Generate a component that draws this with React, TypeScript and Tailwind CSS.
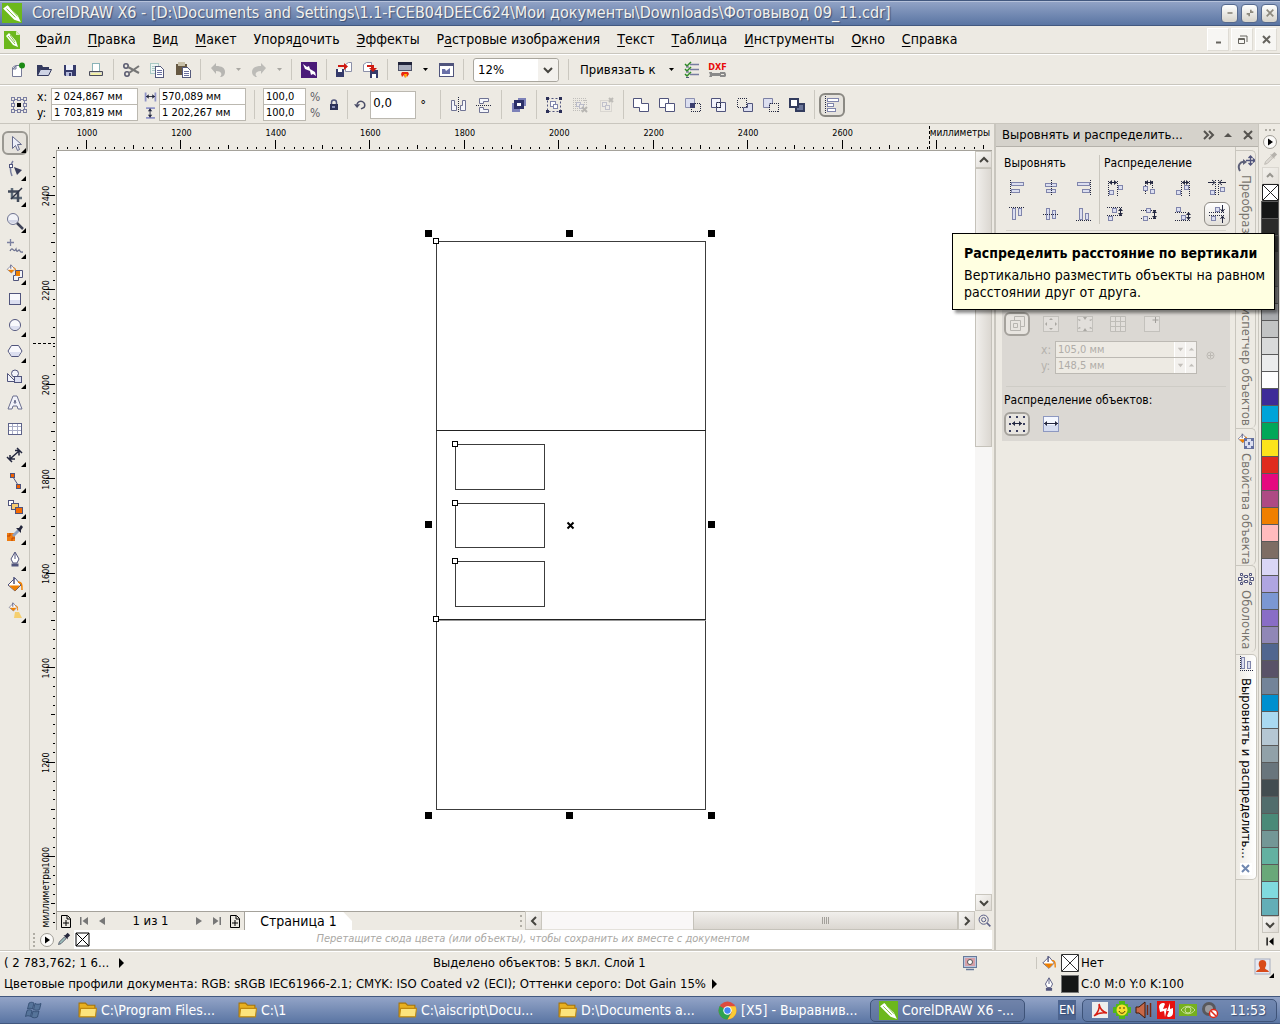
import * as React from "react";
import { clsx } from "clsx";

const INK = "#50547c";
const PALE = "#dcdff0";

function ArrowH({ x1, x2, y }: { x1: number; x2: number; y: number }): React.ReactElement {
  return (
    <g fill="#23273f" stroke="none">
      <rect x={x1} y={y} width={x2 - x1} height="1" />
      <path d={`M${x1} ${y + 0.5}l3 -2.5v5z M${x2} ${y + 0.5}l-3 -2.5v5z`} />
    </g>
  );
}

function ArrowV({ x, y1, y2 }: { x: number; y1: number; y2: number }): React.ReactElement {
  return (
    <g fill="#23273f" stroke="none">
      <rect x={x} y={y1} width="1" height={y2 - y1} />
      <path d={`M${x + 0.5} ${y1}l-2.5 3h5z M${x + 0.5} ${y2}l-2.5 -3h5z`} />
    </g>
  );
}

function Dots({ d }: { d: string }): React.ReactElement {
  return <path d={d} stroke="#23273f" strokeDasharray="1 1" fill="none" shapeRendering="crispEdges" />;
}

function Boxes({ at, fill = PALE }: { at: number[][]; fill?: string }): React.ReactElement {
  return (
    <g shapeRendering="crispEdges" fill={fill} stroke="#8085ac">
      {at.map(([x, y, w, h]) => (
        <rect key={`${x}-${y}`} x={x + 0.5} y={y + 0.5} width={w - 1} height={h - 1} />
      ))}
    </g>
  );
}

function Bucket({ scale = 1 }: { scale?: number }): React.ReactElement {
  return (
    <g transform={`scale(${scale})`}>
      <path d="M2 9l7-7 6 7-6 6z" fill="#fff" stroke="#50547c" />
      <path d="M3 9.500h11l-5 5.500z" fill="#f08000" />
      <path d="M8 1v7" stroke="#50547c" strokeWidth="1.500" />
      <path d="M12 6c4 0 4 3 4 8" stroke="#f08000" strokeWidth="1.500" fill="none" />
    </g>
  );
}

const nib = (
  <g stroke={INK}>
    <path d="M9 2l4 7-2 4H7L5 9z" fill="#fff" />
    <path d="M9 3v6" />
    <rect x="6" y="14" width="6" height="2" fill={INK} />
  </g>
);

const icons: Record<string, React.ReactNode> = {
  logo: (
    <>
      <rect width="18" height="18" fill="#6cb81c" />
      <path d="M1 5l4-3 9 9 3 6-6-2z" fill="#fff" />
      <path d="M4 5l8 8M7 4l7 8" stroke="#6cb81c" strokeWidth="0.800" />
    </>
  ),
  doc: (
    <>
      <path d="M1 0h12l4 4v14H1z" fill="#6cb81c" />
      <path d="M13 0v4h4z" fill="#d5ecb8" />
      <path d="M3 5l3-3 7 8 2 6-5-2z" fill="#fff" />
      <path d="M5 5l7 8M7 4l5 7" stroke="#6cb81c" strokeWidth="0.800" />
    </>
  ),
  new: (
    <>
      <path d="M3.500 6.500l3-2h6v11h-9z" fill="#fff" stroke="#777b97" />
      <path d="M4 8l3-3v3z" fill={PALE} stroke="#777b97" />
      <circle cx="13" cy="4.500" r="3" fill="#1b8a14" />
    </>
  ),
  open: (
    <>
      <path d="M2 15V4h5l1 2h6v3" fill="#343a5e" />
      <path d="M2.500 14.500L5.500 8.500h11l-3 6z" fill="#ced3e4" stroke="#343a5e" />
    </>
  ),
  save: (
    <>
      <path d="M3 4h12v11H4l-1-1z" fill="#363b6b" />
      <rect x="5" y="4" width="7" height="5" fill="#eef0fa" />
      <rect x="5" y="11" width="6" height="4" fill="#b6bbdb" />
      <rect x="8" y="12" width="2" height="3" fill="#363b6b" />
    </>
  ),
  print: (
    <>
      <rect x="5.500" y="2.500" width="7" height="8" fill="#fff" stroke="#8bb3b8" />
      <path d="M2.500 10.500h13v4h-13z" fill="#d9d7c9" stroke="#4b4c5a" />
      <rect x="4" y="12" width="10" height="2" fill="#f2f0a8" />
    </>
  ),
  cut: (
    <g fill="none" stroke="#5a5b70" strokeWidth="1.600">
      <circle cx="4" cy="5" r="2.200" />
      <circle cx="5" cy="13" r="2.200" />
      <path d="M6 6l11 6M7 12l10-7" stroke="#777" strokeWidth="2" />
    </g>
  ),
  copy: (
    <g shapeRendering="crispEdges">
      <rect x="2.500" y="2.500" width="8" height="10" fill="#eef4f2" stroke="#a9c9c4" />
      <path d="M4 5h5M4 7h3M4 9h3" stroke="#a9c9c4" />
      <path d="M7.500 5.500h5l3 3v8h-8z" fill="#fff" stroke="#555a7c" />
      <path d="M9 9.500h5M9 11.500h5M9 13.500h5" stroke="#6a70a0" />
    </g>
  ),
  paste: (
    <g shapeRendering="crispEdges">
      <rect x="2" y="3" width="11" height="11" fill="#665842" />
      <rect x="4" y="1" width="7" height="4" fill="#c8c0a8" />
      <path d="M8.500 6.500h5l3 3v7h-8z" fill="#fff" stroke="#555a7c" />
      <path d="M10 10.500h5M10 12.500h5M10 14.500h5" stroke="#6a70a0" />
    </g>
  ),
  undo: <path d="M2 7l5-5v3c6 0 9 2 9 6 0 3-2 5-5 5 3-3 1-6-4-6v3z" fill="#b7b6b2" />,
  redo: <path d="M16 7l-5-5v3C5 5 2 7 2 11c0 3 2 5 5 5-3-3-1-6 4-6v3z" fill="#bdbcb8" />,
  connect: (
    <>
      <rect x="1" y="1" width="16" height="16" fill="#4a1a78" />
      <path d="M3 3l4 3 2-1 1 3 5 3 1 4-3-2-2 1-1-4-5-2z" fill="#fff" />
    </>
  ),
  import: (
    <>
      <path d="M10.500 3.500l3-2h3v9h-6z" fill="#fff" stroke="#8b8fa8" />
      <rect x="1" y="8" width="8" height="8" fill="#363b6b" />
      <rect x="3" y="8" width="4" height="3" fill="#fff" />
      <path d="M3 4h6V2l4 3.500L9 9V6H3z" fill="#cf1b12" />
    </>
  ),
  export: (
    <>
      <path d="M2.500 3.500l3-2h5v9h-8z" fill="#fff" stroke="#8b8fa8" />
      <rect x="9" y="9" width="8" height="8" fill="#363b6b" />
      <rect x="11" y="13" width="4" height="4" fill="#fff" />
      <path d="M6 4h7v3h3l-4 4-4-4h2V6H6z" fill="#cf1b12" />
    </>
  ),
  launch: (
    <>
      <rect x="2.500" y="1.500" width="13" height="8" fill="#a9adbd" stroke="#50546a" />
      <rect x="2" y="1" width="14" height="3" fill="#20233a" />
      <path d="M6 11h6l1 2-2 3-1-2-1 3-1-3-2 2-1-3z" fill="#e82810" />
      <path d="M8 13h3l-1 4-1-1z" fill="#ffb000" />
    </>
  ),
  welcome: (
    <>
      <rect x="2.500" y="2.500" width="14" height="13" fill="#fff" stroke={INK} />
      <rect x="2" y="2" width="15" height="3" fill={INK} />
      <path d="M5 8h3l1 2 4-3v6H5z" fill="#6a70a8" />
    </>
  ),
  options: (
    <>
      <path d="M7 3.500h9M7 8.500h9M7 13.500h9" stroke="#777da0" strokeWidth="1.500" />
      <path d="M2 3l2 2 4-4M2 8l2 2 4-4M2 13l2 2 4-4" fill="none" stroke="#2d8a26" strokeWidth="1.500" />
      <path d="M3 6h3M3 11h3M3 16.500h3" stroke={INK} />
    </>
  ),
  wrench: <path d="M0 0h3v1h8V0h5l1 2v2l-1 1h-5V4H3v1H0l1-2z M12 2v1h3V2z" fill="#8a8a8a" fillRule="evenodd" />,
  origin: (
    <g shapeRendering="crispEdges" fill="#edeae3" stroke="#7a7ea2">
      <path d="M3.500 3.500h11v11h-11z" />
      {[2, 8, 14].map((y) =>
        [2, 8, 14].map((x) => <rect key={`${x}-${y}`} x={x - 0.5} y={y - 0.5} width="3" height="3" />),
      )}
      <rect x="7" y="7" width="4" height="4" fill="#000" stroke="none" />
    </g>
  ),
  lock: (
    <>
      <path d="M6.500 9V6.500a2.500 2.500 0 015 0V9" fill="none" stroke={INK} strokeWidth="1.500" />
      <rect x="5" y="8" width="8" height="6" fill="#2d3158" />
      <rect x="7" y="10" width="3" height="2" fill="#8b90b8" />
    </>
  ),
  rotate: (
    <>
      <path d="M4 8a5 5 0 119 4l-4 2" fill="none" stroke="#4b4e68" strokeWidth="2" />
      <path d="M0 8h8l-4 5z" fill="#4b4e68" />
    </>
  ),
  width: (
    <>
      <path d="M3.500 4v10M14.500 4v10" stroke="#8f93c8" strokeWidth="2" />
      <ArrowH x1={4} x2={14} y={8} />
    </>
  ),
  height: (
    <>
      <path d="M4 3.500h10M4 14.500h10" stroke="#8f93c8" strokeWidth="2" />
      <ArrowV x={8} y1={4} y2={14} />
    </>
  ),
  mirrorH: (
    <>
      <Dots d="M9.500 1v16" />
      <path d="M2.500 4.500h3v5h2v5h-5zM16.500 4.500h-3v5h-2v5h5z" fill="#f5f6fb" stroke="#6f7394" />
    </>
  ),
  mirrorV: (
    <>
      <Dots d="M1 9.500h16" />
      <path d="M4.500 2.500h9v3h-5v2h-4zM4.500 16.500h9v-3h-5v-2h-4z" fill="#f5f6fb" stroke="#6f7394" />
    </>
  ),
  front: (
    <g shapeRendering="crispEdges">
      <rect x="8" y="2" width="8" height="8" fill="#7d81b8" />
      <rect x="2" y="7" width="8" height="9" fill="#7d81b8" />
      <rect x="4" y="4" width="10" height="9" fill="#2c3068" />
      <rect x="7" y="7" width="4" height="3" fill="#fff" />
    </g>
  ),
  group: (
    <>
      <path d="M2.500 2.500h13v13h-13z" fill="none" stroke={INK} strokeDasharray="2 2" />
      <path d="M1 1h3v3H1zM14 1h3v3h-3zM1 14h3v3H1zM14 14h3v3h-3z" fill="#2c3058" />
      <Boxes at={[[5, 5, 6, 6], [8, 8, 5, 5]]} fill="#fff" />
    </>
  ),
  ungroup: (
    <g opacity="0.450">
      <path
        d="M2 2.500h14M2 4.500h14M2 12.500h9M2 14.500h9M2.500 4v10M4.500 4v10M13.500 4v6M15.500 4v6"
        stroke="#8b8b8b"
        strokeDasharray="1 1"
      />
      <Boxes at={[[5, 6, 5, 5], [8, 8, 5, 5]]} fill="#eee" />
      <path d="M11 11l5 5M16 11l-5 5" stroke="#777" strokeWidth="2" />
    </g>
  ),
  ungroupAll: (
    <g opacity="0.400">
      <path d="M3.500 4.500h11v11h-11z" fill="none" stroke="#8b8b8b" strokeDasharray="1 1" />
      <Boxes at={[[5, 6, 5, 5], [8, 9, 5, 5]]} fill="#eee" />
      <path d="M12 2l4 4M16 2l-4 4" stroke="#777" strokeWidth="2" />
    </g>
  ),
  weld: <path d="M1.500 2.500h8v5h7v8h-9v-4h-6z" fill="#fff" stroke={INK} />,
  trim: (
    <g fill="#fff" stroke={INK}>
      <path d="M7.500 7.500h9v8h-9z" />
      <path d="M1.500 2.500h9v5h-3v4h-6z" />
    </g>
  ),
  intersect: (
    <>
      <path d="M1.500 2.500h9v9h-9z" fill={PALE} stroke="#8b8fb0" />
      <rect x="6" y="7" width="5" height="5" fill="#3c4070" />
      <Dots d="M11 7.500h5.500v8h-9v-4" />
    </>
  ),
  simplify: (
    <>
      <path d="M1.500 2.500h9v9h-9zM6.500 6.500h9v9h-9z" fill="#f2f3fa" stroke={INK} />
      <Dots d="M6.500 6.500h4v5h-4z" />
    </>
  ),
  frontMinus: (
    <>
      <Dots d="M1.500 2.500h9v9h-9z" />
      <path d="M11.500 7.500h5v8h-9v-4h4z" fill={PALE} stroke={INK} />
    </>
  ),
  backMinus: (
    <>
      <path d="M1.500 2.500h9v5h-3v4h-6z" fill={PALE} stroke="#7c80a4" />
      <Dots d="M7.500 7.500h9v8h-9z" />
    </>
  ),
  boundary: (
    <>
      <path d="M8 8h8v7H8z" fill="#6a7598" stroke="#333c5e" strokeWidth="2" />
      <path d="M2 3h8v8H2z" fill="#fff" stroke="#333c5e" strokeWidth="2" />
    </>
  ),
  alignPanel: (
    <>
      <Dots d="M2.500 0v18" />
      <Boxes at={[[4, 2, 12, 4], [4, 7, 7, 4], [4, 12, 9, 4]]} fill="#fff" />
    </>
  ),
  alignL: (
    <>
      <Dots d="M2.500 1v16" />
      <Boxes at={[[3, 3, 13, 4], [3, 10, 9, 4]]} />
    </>
  ),
  alignCH: (
    <>
      <Boxes at={[[3, 4, 12, 4], [4, 10, 10, 4]]} />
      <Dots d="M9.500 1v16" />
    </>
  ),
  alignR: (
    <>
      <Dots d="M15.500 1v16" />
      <Boxes at={[[2, 3, 13, 4], [7, 10, 8, 4]]} />
    </>
  ),
  alignT: (
    <>
      <Dots d="M1 2.500h16" />
      <Boxes at={[[4, 3, 4, 12], [10, 3, 4, 8]]} />
    </>
  ),
  alignCV: (
    <>
      <Boxes at={[[4, 3, 4, 12], [10, 5, 4, 9]]} />
      <Dots d="M1 9.500h16" />
    </>
  ),
  alignB: (
    <>
      <Dots d="M1 15.500h16" />
      <Boxes at={[[4, 3, 4, 12], [10, 8, 4, 7]]} />
    </>
  ),
  distL: (
    <>
      <Dots d="M2.500 2v15M11.500 2v15" />
      <ArrowH x1={3} x2={11} y={3} />
      <Boxes at={[[3, 11, 5, 5], [12, 6, 5, 5]]} />
    </>
  ),
  distCH: (
    <>
      <Dots d="M5.500 2v14M12.500 2v14" />
      <ArrowH x1={5} x2={13} y={3} />
      <Boxes at={[[3, 7, 5, 5], [10, 10, 5, 5]]} />
    </>
  ),
  distR: (
    <>
      <Dots d="M7.500 2v15M15.500 2v15" />
      <ArrowH x1={8} x2={15} y={3} />
      <Boxes at={[[2, 11, 5, 5], [10, 6, 5, 5]]} />
    </>
  ),
  distSH: (
    <>
      <Dots d="M7.500 1v16M10.500 1v16" />
      <path d="M0 3.500h6M12 3.500h6M4 1l3 2.500L4 6M14 1l-3 2.500L14 6" stroke="#23273f" fill="none" />
      <Boxes at={[[2, 11, 5, 5], [12, 8, 5, 5]]} />
    </>
  ),
  distT: (
    <>
      <Dots d="M1 2.500h16M1 10.500h16" />
      <ArrowV x={14} y1={3} y2={11} />
      <Boxes at={[[6, 3, 5, 5], [2, 11, 5, 5]]} />
    </>
  ),
  distCV: (
    <>
      <Dots d="M1 5.500h15M1 13.500h16" />
      <ArrowV x={14} y1={5} y2={14} />
      <Boxes at={[[6, 3, 5, 5], [3, 11, 5, 5]]} />
    </>
  ),
  distB: (
    <>
      <Dots d="M1 7.500h12M1 15.500h16" />
      <ArrowV x={14} y1={7} y2={15} />
      <Boxes at={[[2, 2, 5, 5], [7, 10, 5, 5]]} />
    </>
  ),
  distSV: (
    <>
      <Dots d="M1 7.500h16M1 10.500h16" />
      <path
        d="M14.500 0v6M14.500 12v6M12.500 4l2 3 2-3M12.500 14l2-3 2 3"
        stroke="#23273f"
        fill="none"
      />
      <Boxes at={[[7, 2, 5, 5], [3, 11, 5, 5]]} />
    </>
  ),
  refObjects: (
    <path d="M2.500 5.500h10v10h-10zM5.500 8.500h4v4h-4zM6.500 5V1.500h10v10H13" stroke="#b7b5b0" />
  ),
  refEdge: (
    <>
      <rect x="1.500" y="1.500" width="15" height="15" fill="#e2dfdb" stroke="#c3c1bc" />
      <path d="M9 3l2 2H7zM9 15l2-2H7zM3 9l2-2v4zM15 9l-2-2v4z" fill="#a9a7a2" />
    </>
  ),
  refCenter: (
    <>
      <rect x="1.500" y="1.500" width="15" height="15" fill="#e2dfdb" stroke="#c3c1bc" />
      <path d="M9 5L7 2h4zM9 13l-2 3h4zM2 4l3 1-2 1zM16 4l-3 1 2 1zM2 14l3-1-2-1zM16 14l-3-1 2-1z" fill="#a9a7a2" />
    </>
  ),
  refGrid: <path d="M1.500 1.500h15v15h-15zM6.500 1v16M11.500 1v16M1 6.500h16M1 11.500h16" fill="#e2dfdb" stroke="#bfbdb8" />,
  refPoint: (
    <>
      <rect x="1.500" y="1.500" width="15" height="15" fill="#e2dfdb" stroke="#c3c1bc" />
      <path d="M12.500 2v6M9.500 5h6" stroke="#a09e9a" />
    </>
  ),
  extentSel: (
    <>
      <path
        d="M1 1h2v2H1zM8 1h2v2H8zM15 1h2v2h-2zM1 15h2v2H1zM8 15h2v2H8zM15 15h2v2h-2zM1 8h2v2H1zM15 8h2v2h-2z"
        fill="#3b3f60"
      />
      <ArrowH x1={4} x2={14} y={8} />
    </>
  ),
  extentPage: (
    <>
      <rect x="1.500" y="1.500" width="15" height="15" fill="#f4f7ff" stroke="#8d98c0" />
      <rect x="2" y="10" width="14" height="6" fill="#d5dcf0" />
      <ArrowH x1={2} x2={16} y={8} />
    </>
  ),
  pick: <path d="M6.500 2.500v12l3-3 2 5 2-1-2-5h4z" fill="#eceef8" stroke="#656a8c" />,
  shape: (
    <>
      <path d="M7 1C4 5 4 11 6 16" fill="none" stroke="#7b80a0" strokeWidth="1.500" />
      <rect x="3.500" y="4.500" width="3" height="3" fill="#fff" stroke={INK} />
      <path d="M8 7l8 3-5 5z" fill="#3a3e5c" />
    </>
  ),
  crop: (
    <>
      <path d="M6 2v10h10" fill="none" stroke="#5e6b78" strokeWidth="2.500" />
      <path d="M2 5.500h10V16" fill="none" stroke="#414a5a" strokeWidth="2.500" />
      <path d="M5 13L16 2" stroke="#2f3446" strokeWidth="1.500" />
    </>
  ),
  zoom: (
    <>
      <circle cx="7" cy="7" r="5.500" fill="#f2f3f8" stroke="#6d7290" />
      <path d="M2 8h10c-1 4-9 4-10 0z" fill="#d2d5e6" />
      <path d="M11 11l6 6" stroke="#3f4358" strokeWidth="2.500" />
    </>
  ),
  freehand: (
    <>
      <path d="M4.500 1v7M1 4.500h7" stroke="#7b80a0" strokeWidth="1.300" />
      <path d="M4 13c3-6 3 3 6-2 1 6 3-2 4 2 1 2 2 1 3 1" fill="none" stroke="#6d7290" strokeWidth="1.300" />
    </>
  ),
  smart: (
    <>
      <Bucket scale={0.6} />
      <path d="M9.500 6.500h7v7h-4v3h-5v-5h2z" fill="#f2f3f8" stroke={INK} />
      <rect x="10" y="7" width="4" height="5" fill="#f08000" />
    </>
  ),
  rect: (
    <g shapeRendering="crispEdges">
      <rect x="3" y="4" width="12" height="11" fill="#f8f8fc" />
      <rect x="3" y="10" width="12" height="5" fill={PALE} />
      <rect x="3.500" y="3.500" width="11" height="11" fill="none" stroke={INK} />
    </g>
  ),
  ellipse: (
    <>
      <circle cx="9" cy="9" r="5.500" fill="#f8f8fc" stroke={INK} />
      <path d="M4 10h10c-1 5-9 5-10 0z" fill={PALE} />
    </>
  ),
  polygon: (
    <>
      <path d="M5.500 3.500h7l3.500 5.500-3.500 5.500h-7L2 9z" fill="#f8f8fc" stroke={INK} />
      <path d="M3 10h12l-3 4H6z" fill={PALE} />
    </>
  ),
  basic: (
    <g fill="#f2f3fa" stroke={INK}>
      <path d="M1.500 5.500l8 8h-8z" />
      <circle cx="9" cy="5.500" r="3.500" />
      <rect x="8.500" y="8.500" width="7" height="6" fill={PALE} />
    </g>
  ),
  letter: <path d="M7 2h4l5 13h-4l-1-3H7l-1 3H2zM8 9h2L9 6z" fill="#f2f3fa" stroke="#6b6f8f" />,
  table: (
    <g shapeRendering="crispEdges">
      <rect x="2" y="3" width="14" height="12" fill="#fff" />
      <path d="M6.500 3v12M11.500 3v12M2 6.500h14M2 10.500h14" fill="none" stroke="#a9adc6" />
      <path d="M2.500 3.500h13v11h-13z" fill="none" stroke="#5d6288" />
    </g>
  ),
  dimension: (
    <path
      d="M4 13l9-8M1 11l5 5M11 2l5 5M4 9v4h5M9 4.500h4v5"
      fill="none"
      stroke="#23273f"
      strokeWidth="1.500"
    />
  ),
  connector: (
    <>
      <path d="M7 5l5 8" stroke={INK} />
      <rect x="4.500" y="1.500" width="4" height="4" fill="#f06000" stroke={INK} />
      <rect x="10.500" y="12.500" width="4" height="4" fill="#f06000" stroke={INK} />
    </>
  ),
  blend: (
    <g stroke={INK}>
      <rect x="2.500" y="2.500" width="5" height="5" fill="#fff" />
      <rect x="5.500" y="5.500" width="7" height="6" fill="#f8cd70" />
      <rect x="9.500" y="9.500" width="7" height="6" fill="#f56a00" />
    </g>
  ),
  dropper: (
    <>
      <path d="M1 9h8v8H1z" fill="#ee7c10" />
      <path d="M4 9v3H1M6 17v-3h3" stroke="#c04400" fill="none" />
      <path d="M6 11l6-6 2 2-6 6z" fill="#8fa2c0" />
      <path d="M10 4l3 0 2-3 2 2-2 3v3z" fill="#23263c" />
    </>
  ),
  nib,
  fill: <Bucket />,
  interactive: (
    <>
      <g transform="translate(2 0)">
        <Bucket scale={0.6} />
      </g>
      <path d="M9 10h4l3 6H8z" fill="#f5cf70" />
    </>
  ),
  pipette: (
    <>
      <path d="M3 15l1-3 6-6 2 2-6 6z" fill="#9fc0bd" stroke="#4b4e60" />
      <path d="M9 4l2 0 3-3 3 3-3 3v2z" fill="#26283c" />
    </>
  ),
  pipetteOff: (
    <>
      <path d="M3 15l1-3 6-6 2 2-6 6z" fill="#dddad4" stroke="#b9b6af" />
      <path d="M9 4l2 0 3-3 3 3-3 3v2z" fill="#b5b2ac" />
    </>
  ),
  play: (
    <>
      <circle cx="9" cy="9" r="6.500" fill="#fbfaf8" stroke="#a09d96" />
      <path d="M7 5.500l5 3.500-5 3.500z" fill="#000" />
    </>
  ),
  addPage: <path d="M4.500 3.500h6l3 3v9h-9zM10 4v3h3M6 11h6M9 8v6" fill="none" stroke="#000" />,
  first: <path d="M5 5h1.500v8H5zM13 5v8L7.500 9z" fill="#777" />,
  prev: <path d="M12 5v8L6 9z" fill="#777" />,
  next: <path d="M6 5v8l6-4z" fill="#777" />,
  last: <path d="M11.500 5H13v8h-1.500zM5 5v8l5.500-4z" fill="#777" />,
  navigator: (
    <g fill="none" stroke="#5b6088" strokeWidth="1.200">
      <circle cx="8" cy="8" r="5.500" />
      <circle cx="8" cy="8" r="2.500" />
      <path d="M12 12l4 4" strokeWidth="2" />
    </g>
  ),
  monitor: (
    <>
      <rect x="2.500" y="2.500" width="13" height="11" fill="#b8c8e0" stroke="#68799a" />
      <rect x="4" y="4" width="10" height="8" fill="#d8a0a8" />
      <circle cx="9" cy="8" r="2.500" fill="#fff" stroke="#555" />
      <path d="M5 15.500h8" stroke="#68799a" strokeWidth="1.500" />
    </>
  ),
  user: (
    <>
      <rect x="1" y="1" width="15" height="15" fill="#e6e9f2" stroke="#a8adc0" />
      <path d="M2 14c1-3 4-2 4-4-2-3-2-8 2.500-8S13 7 11 10c0 2 3 1 4 4z" fill="#d84a1a" />
    </>
  ),
  transform: (
    <>
      <path
        d="M13.500 1v9M9 5.500h9M11.500 3l2-2 2 2M11.500 8l2 2 2-2M16 3.500l2 2-2 2"
        fill="none"
        stroke={INK}
        strokeWidth="1.300"
      />
      <path d="M8 7c-5-1-8 4-5 9" fill="none" stroke="#5d6078" strokeWidth="2" />
      <path d="M6 4l4 3-4 3z" fill="#5d6078" />
    </>
  ),
  manager: (
    <g fill={PALE} stroke={INK}>
      <rect x="3.500" y="3.500" width="7" height="7" />
      <rect x="7.500" y="7.500" width="7" height="7" />
    </g>
  ),
  properties: (
    <>
      <Bucket scale={0.65} />
      <rect x="7.500" y="5.500" width="9" height="10" fill={PALE} stroke="#6e78a0" />
      <path d="M7 5h3v3H7zM14 5h3v3h-3zM11 9h2v3h-2zM7 13h3v3H7zM14 13h3v3h-3z" fill="#6470a0" />
    </>
  ),
  envelope: (
    <g fill="#fff" stroke={INK}>
      <path
        d="M4 5c3 2 7 2 10 0M4 13c3-2 7-2 10 0M4 5c2 3 2 5 0 8M14 5c-2 3-2 5 0 8"
        fill="none"
        strokeDasharray="1 1"
      />
      <path d="M1.500 7.500h3v3h-3zM13.500 7.500h3v3h-3zM3.500 3.500h2v2h-2zM12.500 3.500h2v2h-2zM3.500 12.500h2v2h-2zM12.500 12.500h2v2h-2zM7.500 5.500h3v2h-3zM7.500 10.500h3v2h-3z" />
    </g>
  ),
  alignTab: (
    <>
      <g transform="translate(2 2)">
        <Boxes at={[[2, 0, 4, 12], [8, 4, 4, 8]]} />
      </g>
      <Dots d="M3.500 1v15M3 15.500h14" />
    </>
  ),
  windows: (
    <g fill="#56749a" stroke="#2f496d" strokeWidth="0.800">
      <path d="M4 2c2-1 3-1 5 0L7.500 8c-2-1-3-1-5 0zM10 2.500c2 1 4 1 6 0L14.500 8.500c-2 1-4 1-6 0z" />
      <path d="M2 9.500c2-1 3-1 5 0L5.500 15.500c-2-1-3-1-5 0zM8 10c2 1 4 1 6 0l-1.500 6c-2 1-4 1-6 0z" />
    </g>
  ),
  folder: (
    <>
      <path d="M1 2h6l2 2h7v11H1z" fill="#e8b020" stroke="#a87408" />
      <path d="M1.500 15l1-8h15l-1 8z" fill="#fde47c" stroke="#c08a10" />
    </>
  ),
  chrome: (
    <>
      <circle cx="9" cy="9" r="8.500" fill="#dd4b3e" />
      <path d="M1.600 4.800A8.500 8.500 0 009 17.500l3.500-6.500z" fill="#2fa350" />
      <path d="M9 17.500A8.500 8.500 0 0016.500 5H9l4 6z" fill="#fccc34" />
      <circle cx="9" cy="9" r="4" fill="#fff" />
      <circle cx="9" cy="9" r="3" fill="#4486f4" />
    </>
  ),
  pdf: (
    <>
      <rect x="1" y="1" width="16" height="16" fill="#eee" />
      <path d="M3 15c4-3 6-8 5-12 1 5 4 8 8 9-5-1-9 0-13 3z" fill="none" stroke="#d81e14" strokeWidth="1.500" />
    </>
  ),
  icq: (
    <>
      <path d="M6 0h6v3h3v3h3v6h-3v3h-3v3H6v-3H3v-3H0V6h3V3h3z" fill="#50b818" />
      <circle cx="9" cy="9" r="5.500" fill="#f8e030" />
      <path d="M6 10c1 3 5 3 6 0M7 6v2M11 6v2" stroke="#4a3a00" fill="none" />
    </>
  ),
  sound: (
    <>
      <path d="M1 6h3l6-5v16l-6-5H1z" fill="#c86848" stroke="#401808" />
      <path d="M12.500 4v10M15.500 2v14" stroke="#7a2810" strokeWidth="1.500" />
    </>
  ),
  flash: (
    <>
      <rect width="18" height="18" fill="#e81010" />
      <path d="M2 6c0-4 5-5 6-3L6 8l4-1-2 9-1-6-4 1zM16 12c0 4-5 5-6 3l2-5-2 0 3-8 0 6 3-1z" fill="#fff" />
    </>
  ),
  nvidia: (
    <>
      <rect y="3" width="18" height="12" fill="#76b020" />
      <path d="M2 9c4-5 10-5 14 0-4 5-10 5-14 0zM6 9a3 3 0 106 0 3 3 0 00-6 0" fill="none" stroke="#c8e098" />
    </>
  ),
  camera: (
    <>
      <circle cx="8" cy="8" r="7" fill="#58585c" />
      <circle cx="8" cy="8" r="4" fill="#9a9a9e" />
      <circle cx="12.500" cy="12.500" r="4" fill="#fff" stroke="#e02818" strokeWidth="1.500" />
      <path d="M10 10l5 5" stroke="#e02818" strokeWidth="1.500" />
    </>
  ),
};

function Icon({ name, className }: { name: string; className?: string }): React.ReactElement {
  return (
    <svg viewBox="0 0 18 18" fill="none" className={clsx("shrink-0", className ?? "size-[18px]")} aria-hidden>
      {icons[name]}
    </svg>
  );
}

function ToolButton({ name, label, pressed }: { name: string; label: string; pressed?: boolean }): React.ReactElement {
  return (
    <button
      type="button"
      aria-label={label}
      className={clsx(
        "flex h-6 w-[26px] shrink-0 items-center justify-center rounded-[6px]",
        pressed && "border-2 border-[#8b8983] bg-[#e6e3dd]",
      )}
    >
      <Icon name={name} />
    </button>
  );
}

function Sep(): React.ReactElement {
  return (
    <div className="flex w-[9px] shrink-0 justify-center self-stretch py-1">
      <div className="w-px bg-[#cbc8c0]" />
    </div>
  );
}

function Caret({ off }: { off?: boolean }): React.ReactElement {
  return (
    <svg viewBox="0 0 15 6" className="h-[6px] w-[15px] shrink-0" aria-hidden>
      <path d="M5 1h5L7.500 4z" fill={off ? "#aaa8a3" : "#000"} />
    </svg>
  );
}

function Chevron({ d, className }: { d: string; className?: string }): React.ReactElement {
  return (
    <button
      type="button"
      aria-label="Прокрутка"
      className={clsx(
        "flex size-[17px] shrink-0 items-center justify-center border border-[#c9c6be] bg-linear-to-br from-[#f8f7f5] to-[#dedad4]",
        className,
      )}
    >
      <svg viewBox="0 0 12 12" className="size-3" fill="none" stroke="#45443f" strokeWidth="2" aria-hidden>
        <path d={d} />
      </svg>
    </button>
  );
}

function NumberField({ label, value, className }: { label: string; value: string; className: string }): React.ReactElement {
  return (
    <input
      aria-label={label}
      defaultValue={value}
      className={clsx("border border-[#bbb8b0] bg-white px-[2px] leading-[14px] outline-none", className)}
    />
  );
}

const menuItems = [
  ["", "Ф", "айл"],
  ["", "П", "равка"],
  ["", "В", "ид"],
  ["", "М", "акет"],
  ["Упоря", "д", "очить"],
  ["", "Э", "ффекты"],
  ["Р", "а", "стровые изображения"],
  ["", "Т", "екст"],
  ["", "Т", "аблица"],
  ["", "И", "нструменты"],
  ["", "О", "кно"],
  ["", "С", "правка"],
];

function TitleBar(): React.ReactElement {
  return (
    <header className="flex h-[26px] items-center border-y border-[#42587f] bg-linear-to-b from-[#93a4c7] to-[#5a75a3] px-[2px] shadow-[inset_0_1px_0_#b6c2db]">
      <Icon name="logo" className="size-5" />
      <h1 className="ml-[10px] min-w-0 flex-1 truncate text-[16px] text-[#f4f2ec] [text-shadow:1px_1px_1px_#3c4f74]">
        CorelDRAW X6 - [D:\Documents and Settings\1.1-FCEB04DEEC624\Мои документы\Downloads\Фотовывод 09_11.cdr]
      </h1>
      <div className="flex gap-[3px]">
        {[
          ["Свернуть", "M3 6h6"],
          ["Восстановить", "M2 7h3v3M7 2v3h3"],
          ["Закрыть", "M2 2l8 8M10 2l-8 8"],
        ].map(([label, d]) => (
          <button
            key={label}
            type="button"
            aria-label={label}
            className="flex h-[19px] w-[17px] items-center justify-center rounded-[4px] border border-[#566a8f] bg-linear-to-b from-white to-[#d6d3ca]"
          >
            <svg viewBox="0 0 12 12" className="size-[10px]" fill="none" stroke="#8d897e" strokeWidth="2" aria-hidden>
              <path d={d} />
            </svg>
          </button>
        ))}
      </div>
    </header>
  );
}

function MenuBar(): React.ReactElement {
  return (
    <nav className="flex h-7 items-center border-b border-[#c9c6be] pl-[3px]">
      <Icon name="doc" />
      <div className="ml-[15px] flex flex-1 gap-[17px] text-[14px]">
        {menuItems.map(([before, key, after]) => (
          <button key={after} type="button" className="whitespace-nowrap">
            {before}
            <span className="underline underline-offset-2">{key}</span>
            {after}
          </button>
        ))}
      </div>
      <div className="flex gap-[2px] pr-[3px]">
        {[
          ["Свернуть документ", "M4 9.500h5"],
          ["Восстановить документ", "M2.500 5.500h6v5h-6zM4 3h7v6M2 6.500h7"],
          ["Закрыть документ", "M3 3l7 7M10 3l-7 7"],
        ].map(([label, d], i) => (
          <button
            key={label}
            type="button"
            aria-label={label}
            className="flex h-[23px] w-[22px] items-center justify-center border border-[#dedbd4] border-t-white border-l-white bg-[#f7f6f3]"
          >
            <svg
              viewBox="0 0 13 13"
              className="size-[13px]"
              fill="none"
              stroke="#66645e"
              strokeWidth={i === 1 ? 1 : 2}
              aria-hidden
            >
              <path d={d} />
            </svg>
          </button>
        ))}
      </div>
    </nav>
  );
}

function StandardBar(): React.ReactElement {
  return (
    <div className="flex h-[31px] items-center border-t border-b border-t-white border-b-[#c9c6be] pl-[5px]">
      <ToolButton name="new" label="Создать" />
      <ToolButton name="open" label="Открыть" />
      <ToolButton name="save" label="Сохранить" />
      <ToolButton name="print" label="Печать" />
      <Sep />
      <ToolButton name="cut" label="Вырезать" />
      <ToolButton name="copy" label="Копировать" />
      <ToolButton name="paste" label="Вставить" />
      <Sep />
      <ToolButton name="undo" label="Отменить" />
      <Caret off />
      <ToolButton name="redo" label="Повторить" />
      <Caret off />
      <Sep />
      <ToolButton name="connect" label="Поиск содержимого" />
      <Sep />
      <ToolButton name="import" label="Импорт" />
      <ToolButton name="export" label="Экспорт" />
      <Sep />
      <ToolButton name="launch" label="Запуск приложений" />
      <Caret />
      <ToolButton name="welcome" label="Экран приветствия" />
      <Sep />
      <div className="relative mx-[5px] flex h-6 w-[86px] items-center rounded-[3px] border border-[#a9a69e] bg-white">
        <select aria-label="Масштаб" className="h-full w-full appearance-none bg-transparent pl-1 text-[13px] outline-none">
          <option>12%</option>
        </select>
        <div className="pointer-events-none absolute inset-y-0 right-0 flex w-5 items-center justify-center rounded-r-[3px] bg-[#f3f1ed]">
          <svg viewBox="0 0 12 12" className="size-3" fill="none" stroke="#45443f" strokeWidth="2" aria-hidden>
            <path d="M2 4l4 4 4-4" />
          </svg>
        </div>
      </div>
      <Sep />
      <button type="button" className="ml-[7px] flex items-center gap-2 text-[13px] whitespace-nowrap">
        Привязать к
        <Caret />
      </button>
      <ToolButton name="options" label="Параметры" />
      <button type="button" className="flex w-[26px] flex-col items-center text-[9px] leading-[10px] font-bold text-[#e80c0c]">
        DXF
        <svg viewBox="0 0 17 6" className="h-[6px] w-[17px]" aria-hidden>
          {icons.wrench}
        </svg>
      </button>
    </div>
  );
}

function PropertyBar(): React.ReactElement {
  return (
    <div className="flex h-[39px] items-center border-t border-b border-t-white border-b-[#c9c6be] pl-[6px]">
      <ToolButton name="origin" label="Исходная точка объекта" />
      <div className="ml-[5px] flex flex-col text-[12px] leading-[16px]">
        <span>x:</span>
        <span>y:</span>
      </div>
      <div className="ml-1 flex w-[87px] flex-col -space-y-px text-[11px]">
        <NumberField label="x" value="2 024,867 мм" className="h-[17px] w-full" />
        <NumberField label="y" value="1 703,819 мм" className="h-[17px] w-full" />
      </div>
      <div className="ml-1 flex flex-col">
        <Icon name="width" className="h-4 w-[17px]" />
        <Icon name="height" className="h-4 w-[17px]" />
      </div>
      <div className="flex w-[87px] flex-col -space-y-px text-[11px]">
        <NumberField label="Ширина" value="570,089 мм" className="h-[17px] w-full" />
        <NumberField label="Высота" value="1 202,267 мм" className="h-[17px] w-full" />
      </div>
      <div className="ml-1 flex self-stretch">
        <Sep />
      </div>
      <div className="ml-1 flex w-[43px] flex-col -space-y-px text-[11px]">
        <NumberField label="Масштаб по горизонтали" value="100,0" className="h-[17px] w-full" />
        <NumberField label="Масштаб по вертикали" value="100,0" className="h-[17px] w-full" />
      </div>
      <div className="ml-1 flex flex-col text-[12px] leading-[16px] text-[#5f5f68]">
        <span>%</span>
        <span>%</span>
      </div>
      <div className="ml-[5px] flex flex-1 items-center self-stretch">
        <Icon name="lock" />
        <Sep />
        <Icon name="rotate" className="mx-[2px] size-[14px]" />
        <NumberField label="Угол поворота" value="0,0" className="h-7 w-[46px] pb-1 text-[13px]" />
        <span className="w-5 pl-1 text-[13px]">°</span>
        <Sep />
        <ToolButton name="mirrorH" label="Отразить по горизонтали" />
        <ToolButton name="mirrorV" label="Отразить по вертикали" />
        <Sep />
        <ToolButton name="front" label="На передний план" />
        <Sep />
        <ToolButton name="group" label="Сгруппировать" />
        <ToolButton name="ungroup" label="Отменить группировку" />
        <ToolButton name="ungroupAll" label="Отменить группировку полностью" />
        <Sep />
        <ToolButton name="weld" label="Объединение" />
        <ToolButton name="trim" label="Исключение" />
        <ToolButton name="intersect" label="Пересечение" />
        <ToolButton name="simplify" label="Упрощение" />
        <ToolButton name="frontMinus" label="Передние минус задние" />
        <ToolButton name="backMinus" label="Задние минус передние" />
        <ToolButton name="boundary" label="Создать границу" />
        <Sep />
        <ToolButton name="alignPanel" label="Выровнять и распределить" pressed />
      </div>
    </div>
  );
}

const tools: { name: string; label: string; plain?: boolean }[] = [
  { name: "pick", label: "Указатель" },
  { name: "shape", label: "Форма" },
  { name: "crop", label: "Обрезка" },
  { name: "zoom", label: "Масштаб" },
  { name: "freehand", label: "Свободная форма" },
  { name: "smart", label: "Интеллектуальная заливка" },
  { name: "rect", label: "Прямоугольник" },
  { name: "ellipse", label: "Эллипс" },
  { name: "polygon", label: "Многоугольник" },
  { name: "basic", label: "Основные фигуры" },
  { name: "letter", label: "Текст", plain: true },
  { name: "table", label: "Таблица", plain: true },
  { name: "dimension", label: "Параллельный размер" },
  { name: "connector", label: "Соединительная линия" },
  { name: "blend", label: "Перетекание" },
  { name: "dropper", label: "Пипетка" },
  { name: "nib", label: "Перо абриса" },
  { name: "fill", label: "Заливка" },
  { name: "interactive", label: "Интерактивная заливка" },
];

function Toolbox(): React.ReactElement {
  return (
    <aside className="flex w-[30px] shrink-0 flex-col gap-[2px] border-r border-[#c9c6be] pt-[7px] pl-[2px]">
      {tools.map(({ name, label, plain }, i) => (
        <button
          key={name}
          type="button"
          aria-label={label}
          className={clsx(
            "relative flex h-6 w-[26px] items-center justify-center rounded-[6px]",
            i === 0 && "border-2 border-[#9a9892] bg-[#e6e3dd]",
          )}
        >
          <Icon name={name} />
          {!plain && (
            <svg
              viewBox="0 0 5 5"
              className={clsx("absolute bottom-0 size-[5px]", i === 0 ? "right-0" : "right-[2px]")}
              aria-hidden
            >
              <path d="M5 0v5H0z" fill="#000" />
            </svg>
          )}
        </button>
      ))}
    </aside>
  );
}

const range = (n: number): number[] => Array.from({ length: n }, (_, i) => i);
const STEP = 9.445;

function tickLength(i: number): number {
  if (i % 10 === 0) return 9;
  return i % 5 === 0 ? 4 : 2;
}

function HorizontalRuler(): React.ReactElement {
  // 1000 mm sits 56px from the ruler's left edge, a tick every 20 mm
  return (
    <div className="relative h-[26px] min-w-0 flex-1">
      <svg className="absolute inset-0 h-full w-full" shapeRendering="crispEdges" aria-hidden>
        {range(99).map((n) => {
          const i = n - 3;
          const length = tickLength(i);
          return <rect key={i} x={Math.round(56 + i * STEP)} y={25 - length} width="1" height={length} fill="#000" />;
        })}
        <path d="M899.500 2v24" stroke="#000" strokeDasharray="3 2" />
        <g fontSize="9" textAnchor="middle" fill="#000">
          {range(9).map((n) => (
            <text key={n} x={57 + n * STEP * 10} y="12">
              {1000 + n * 200}
            </text>
          ))}
        </g>
      </svg>
      <span className="absolute top-[3px] right-0 text-[10px] leading-3">миллиметры</span>
    </div>
  );
}

function VerticalRuler(): React.ReactElement {
  return (
    <div className="relative w-[27px] shrink-0 border-r border-[#a5a29b]">
      <svg className="absolute inset-0 h-full w-full" shapeRendering="crispEdges" aria-hidden>
        {range(86).map((n) => {
          const i = n - 4;
          const length = tickLength(i);
          return <rect key={i} x={25 - length} y={Math.round(45 + i * STEP)} width={length} height="1" fill="#000" />;
        })}
        <path d="M3 193.500h22" stroke="#000" strokeDasharray="3 2" />
        <g fontSize="9" textAnchor="middle" fill="#000">
          {range(8).map((n) => {
            const y = 46 + n * STEP * 10;
            return (
              <text key={n} x="19" y={y} transform={`rotate(-90 19 ${y})`}>
                {2400 - n * 200}
              </text>
            );
          })}
        </g>
      </svg>
      <span className="absolute bottom-[3px] left-[10px] rotate-180 text-[10px] leading-3 [writing-mode:vertical-rl]">
        миллиметры
      </span>
    </div>
  );
}

function Drawing(): React.ReactElement {
  const handles = [
    [368, 79], [509, 79], [651, 79],
    [368, 370], [651, 370],
    [368, 661], [509, 661], [651, 661],
  ];
  const nodes = [[376, 87], [395, 290], [395, 349], [395, 407], [376, 465]];
  return (
    <svg className="absolute inset-0 h-full w-full" shapeRendering="crispEdges" role="img" aria-label="Рисунок">
      <g fill="none" stroke="#3c3c3c">
        <path d="M379.500 90.500h269v568h-269z" />
        <path d="M379 279.500h270M379 468.500h270" stroke="#222" />
        <path d="M379 469.500h270" stroke="#999" />
        <path d="M398.500 293.500h89v45h-89zM398.500 352.500h89v44h-89zM398.500 410.500h89v45h-89z" />
      </g>
      {handles.map(([x, y]) => (
        <rect key={`${x}-${y}`} x={x} y={y} width="7" height="7" fill="#000" />
      ))}
      {nodes.map(([x, y]) => (
        <rect key={`${x}-${y}`} x={x + 0.5} y={y + 0.5} width="5" height="5" fill="#fff" stroke="#000" />
      ))}
      <path d="M510.500 371.500l6 6M516.500 371.500l-6 6" stroke="#000" strokeWidth="2" shapeRendering="auto" />
    </svg>
  );
}

function PageBar(): React.ReactElement {
  return (
    <div className="flex h-[19px] shrink-0 items-center">
      <div className="flex h-full w-[468px] shrink-0 items-center border-t border-[#a5a29b]">
        <Icon name="addPage" />
        <Icon name="first" />
        <Icon name="prev" />
        <span className="w-[79px] text-center text-[13px]">1 из 1</span>
        <Icon name="next" />
        <Icon name="last" />
        <Icon name="addPage" />
        <button
          type="button"
          className="h-full w-[108px] border-l border-[#a5a29b] bg-white text-[14px] leading-[18px] [clip-path:polygon(0_0,92%_0,100%_50%,100%_100%,0_100%)]"
        >
          Страница 1
        </button>
        <div className="mr-[3px] ml-auto flex flex-col gap-[3px]">
          {range(3).map((n) => (
            <i key={n} className="size-[2px] bg-[#b0ada5]" />
          ))}
        </div>
      </div>
      <Chevron d="M8 2L4 6l4 4" className="h-full" />
      <div className="h-full w-[151px] shrink-0 border-y border-[#e4e1db] bg-[#f9f7f7]" />
      <div className="flex h-full min-w-0 flex-1 items-center justify-center gap-px border border-[#c5c2ba] bg-linear-to-b from-[#f1efec] to-[#dbd7d1]">
        {range(4).map((n) => (
          <i key={n} className="h-[7px] w-px bg-[#a3a09a]" />
        ))}
      </div>
      <Chevron d="M4 2l4 4-4 4" className="h-full" />
      <Icon name="navigator" className="mx-[2px] size-[15px]" />
    </div>
  );
}

function Workspace(): React.ReactElement {
  return (
    <main className="flex min-w-0 flex-1 flex-col border-r border-[#c9c6be]">
      <div className="flex shrink-0 pr-1">
        <HorizontalRuler />
      </div>
      <div className="flex min-h-[400px] flex-1">
        <VerticalRuler />
        <div className="flex min-w-0 flex-1 flex-col">
          <div className="flex flex-1">
            <div className="relative min-w-0 flex-1 border-t border-[#a5a29b] bg-white">
              <Drawing />
            </div>
            <div className="mr-[2px] flex w-[17px] shrink-0 flex-col border-t border-[#a5a29b] bg-[#f7f6f5]">
              <Chevron d="M2 8l4-4 4 4" />
              <div className="h-[279px] border border-[#c5c2ba] bg-linear-to-r from-[#f1efec] to-[#dbd7d1]" />
              <div className="flex-1" />
              <Chevron d="M2 4l4 4 4-4" />
            </div>
          </div>
          <PageBar />
        </div>
      </div>
      <div className="mr-[2px] flex h-5 shrink-0 items-center border-b border-[#c9c6be] bg-white">
        <div className="flex h-full w-[44px] shrink-0 items-center bg-[#edeae3] pl-[3px]">
          <div className="mr-[3px] flex flex-col gap-[2px]">
            {range(4).map((n) => (
              <i key={n} className="size-[2px] bg-[#b0ada5]" />
            ))}
          </div>
          <Icon name="play" />
          <Icon name="pipette" className="size-[15px]" />
        </div>
        <svg viewBox="0 0 15 15" className="ml-[1px] size-[15px] shrink-0" aria-hidden>
          <path d="M1 1h13v13H1zM1 1l13 13M14 1L1 14" fill="#fff" stroke="#000" />
        </svg>
        <p className="min-w-0 flex-1 truncate pr-4 text-center text-[11px] text-[#aaa8a4] italic">
          Перетащите сюда цвета (или объекты), чтобы сохранить их вместе с документом
        </p>
      </div>
    </main>
  );
}

function DockButton({ name, label, look }: { name: string; label: string; look?: "pressed" | "hover" }): React.ReactElement {
  return (
    <button
      type="button"
      aria-label={label}
      className={clsx(
        "flex h-6 w-[26px] items-center justify-center rounded-[6px]",
        look === "pressed" && "border-2 border-[#a5a29c] bg-[#e8e5e0]",
        look === "hover" && "border border-[#8f8c86] bg-linear-to-b from-white to-[#e2dfd9]",
      )}
    >
      <Icon name={name} />
    </button>
  );
}

function Tooltip(): React.ReactElement {
  return (
    <div
      role="tooltip"
      className="absolute top-[31px] right-[-45px] z-20 h-[77px] w-[323px] border border-black bg-[#ffffe1] px-[11px] pt-[11px] text-left text-[14px] whitespace-nowrap shadow-[3px_3px_3px_rgba(0,0,0,0.45)]"
    >
      <p className="leading-4 font-bold">Распределить расстояние по вертикали</p>
      <p className="mt-[6px] leading-[17px]">
        Вертикально разместить объекты на равном
        <br />
        расстоянии друг от друга.
      </p>
    </div>
  );
}

function DisabledCoordinate({ axis, value }: { axis: string; value: string }): React.ReactElement {
  return (
    <div className="flex items-center">
      <label htmlFor={`point-${axis}`} className="w-[14px] text-[12px] leading-4 text-[#b5b2ad]">
        {axis}:
      </label>
      <div className="flex h-[17px] w-[142px] border border-[#bcb9b3]">
        <input
          id={`point-${axis}`}
          disabled
          defaultValue={value}
          className="min-w-0 flex-1 bg-[#edeae3] px-[2px] text-[11px] leading-[14px] text-[#b0ada8]"
        />
        {["M2 3h6L5 7z", "M2 6h6L5 3z"].map((d) => (
          <button
            key={d}
            type="button"
            disabled
            aria-label={`Изменить ${axis}`}
            className="flex w-[11px] items-center justify-center border-l border-white bg-[#f3f1ee]"
          >
            <svg viewBox="0 0 10 10" className="size-[9px]" aria-hidden>
              <path d={d} fill="#c2bfba" />
            </svg>
          </button>
        ))}
      </div>
    </div>
  );
}

const dockTabs = [
  { icon: "transform", title: "Преобразования", size: "h-[123px]" },
  { icon: "manager", title: "Диспетчер объектов", size: "h-[155px]" },
  { icon: "properties", title: "Свойства объекта", size: "h-[137px]" },
  { icon: "envelope", title: "Оболочка", size: "h-[87px]" },
];

function Docker(): React.ReactElement {
  return (
    <aside className="flex w-[263px] shrink-0 flex-col border-l border-[#c9c6be]">
      <div className="flex h-[23px] items-center border-b border-[#b5b2ab] bg-[#d5d2cb] pr-1 pl-[6px] text-[13px]">
        <h2 className="flex-1 whitespace-nowrap">Выровнять и распределить...</h2>
        <svg viewBox="0 0 52 12" className="h-3 w-[52px]" fill="none" stroke="#55534f" strokeWidth="2" aria-hidden>
          <path d="M2 2l4 4-4 4M7 2l4 4-4 4M42 2l8 8M50 2l-8 8" />
          <path d="M22 8l4-4 4 4z" fill="#55534f" stroke="none" />
        </svg>
      </div>
      <div className="flex flex-1">
        <div className="min-w-0 flex-1 pt-2 pr-[5px] pl-[6px]">
          <div className="flex h-[69px] text-[12px]">
            <section className="w-[98px] border-r border-[#c9c6be]">
              <h3 className="pl-[2px] leading-4">Выровнять</h3>
              <div className="mt-[5px] grid grid-cols-[34px_33px_26px] gap-y-[2px] pl-[2px]">
                <DockButton name="alignL" label="Выровнять по левому краю" />
                <DockButton name="alignCH" label="Выровнять центры по горизонтали" />
                <DockButton name="alignR" label="Выровнять по правому краю" />
                <DockButton name="alignT" label="Выровнять по верхнему краю" />
                <DockButton name="alignCV" label="Выровнять центры по вертикали" />
                <DockButton name="alignB" label="Выровнять по нижнему краю" />
              </div>
            </section>
            <section className="flex-1">
              <h3 className="pl-1 leading-4">Распределение</h3>
              <div className="mt-[5px] grid grid-cols-[34px_34px_34px_26px] gap-y-[2px] pl-[2px]">
                <DockButton name="distL" label="Распределить слева" />
                <DockButton name="distCH" label="Распределить центры по горизонтали" />
                <DockButton name="distR" label="Распределить справа" />
                <DockButton name="distSH" label="Распределить расстояние по горизонтали" />
                <DockButton name="distT" label="Распределить сверху" />
                <DockButton name="distCV" label="Распределить центры по вертикали" />
                <DockButton name="distB" label="Распределить снизу" />
                <div className="relative">
                  <DockButton name="distSV" label="Распределить расстояние по вертикали" look="hover" />
                  <Tooltip />
                </div>
              </div>
            </section>
          </div>
          <div className="mx-1 mt-[6px] h-px bg-[#d5d2cb]" />
          <div className="mt-[9px] bg-[#dbd8d3] px-[2px] pt-[72px] pb-[5px]">
            <div className="grid grid-cols-[34px_34px_33px_34px_26px]">
              <DockButton name="refObjects" label="Активные объекты" look="pressed" />
              <DockButton name="refEdge" label="Край страницы" />
              <DockButton name="refCenter" label="Центр страницы" />
              <DockButton name="refGrid" label="Сетка" />
              <DockButton name="refPoint" label="Указанная точка" />
            </div>
            <div className="mt-[5px] flex items-center gap-[9px] pl-[37px]">
              <div className="-space-y-px">
                <DisabledCoordinate axis="x" value="105,0 мм" />
                <DisabledCoordinate axis="y" value="148,5 мм" />
              </div>
              <svg viewBox="0 0 9 9" className="mb-1 size-[9px]" fill="none" stroke="#bcb9b3" aria-hidden>
                <circle cx="4.500" cy="4.500" r="3.500" />
                <path d="M2 4.500h5M4.500 2v5" />
              </svg>
            </div>
            <div className="mx-[2px] mt-3 h-px bg-[#ceccc6]" />
            <h3 className="mt-[5px] text-[12px] leading-4 whitespace-nowrap">Распределение объектов:</h3>
            <div className="mt-1 flex gap-2">
              <DockButton name="extentSel" label="В пределах выделения" look="pressed" />
              <DockButton name="extentPage" label="В пределах страницы" />
            </div>
          </div>
        </div>
        <div className="flex w-[23px] shrink-0 flex-col border-l border-[#c9c6be] pt-[3px]">
          {dockTabs.map(({ icon, title, size }) => (
            <button
              key={title}
              type="button"
              className={clsx(
                "flex w-5 flex-col items-center gap-[2px] rounded-r-[5px] border-t border-r border-[#c9c6be] pt-1 text-[13px] leading-4 whitespace-nowrap text-[#77746e]",
                size,
              )}
            >
              <Icon name={icon} />
              <span className="[writing-mode:vertical-rl]">{title}</span>
            </button>
          ))}
          <button
            type="button"
            className="mt-[2px] flex h-[226px] w-[21px] flex-col items-center gap-1 rounded-r-[5px] border-y border-r border-[#c9c6be] bg-linear-to-r from-[#edeae3] to-white text-[13px] leading-4 whitespace-nowrap"
          >
            <Icon name="alignTab" />
            <span className="h-[182px] [writing-mode:vertical-rl]">Выровнять и распределить...</span>
            <svg viewBox="0 0 12 12" className="size-3 bg-white" fill="none" stroke="#7088b0" strokeWidth="2" aria-hidden>
              <path d="M2 2l7 7M9 2L2 9" />
            </svg>
          </button>
        </div>
      </div>
    </aside>
  );
}

const swatches = [
  "#151616", "#2b2b2a", "#3e3e3d", "#5b5b5b", "#727271", "#898989", "#a9abae", "#c2c4c4", "#d9dada", "#ebecec",
  "#fefefe", "#3e2b98", "#00a4d8", "#00a859", "#fce41b", "#df2b1e", "#e5097f", "#ae4a84", "#ef7f00", "#ffbbbd",
  "#7e6d64", "#dad6f6", "#afa5e1", "#7b97d3", "#896dc6", "#9087b6", "#51668f", "#595268", "#738499", "#0090cf",
  "#a9d9f1", "#b5c7d3", "#91a1a8", "#69757c", "#434d50", "#526d6c", "#4a8a78", "#739796", "#63b1a1", "#69a879",
  "#80dade", "#63aeb7",
];

function ColorPalette(): React.ReactElement {
  return (
    <aside className="flex w-[22px] shrink-0 flex-col items-center border-l border-[#c9c6be] pt-[5px] pr-px pl-[2px]">
      <div className="flex h-1 gap-[2px]">
        {range(3).map((n) => (
          <i key={n} className="size-[2px] bg-[#b0ada5]" />
        ))}
      </div>
      <Icon name="play" />
      <Icon name="pipetteOff" className="size-4" />
      <Chevron d="M3 7l3-3 3 3" className="opacity-50" />
      <svg viewBox="0 0 17 17" className="size-[17px] shrink-0" aria-hidden>
        <path d="M.5.5h16v16H.5zM1 1l15 15M16 1L1 16" fill="#fff" stroke="#222" />
      </svg>
      <div className="flex w-full flex-col border border-b-0 border-[#5a5a5a]">
        {swatches.map((color) => (
          <button
            key={color}
            type="button"
            aria-label={color}
            className="h-[17px] w-full border-b border-[#5a5a5a]"
            style={{ backgroundColor: color }}
          />
        ))}
      </div>
      <Chevron d="M2 4l4 4 4-4" />
      <svg viewBox="0 0 18 18" className="size-4" aria-hidden>
        <path d="M5 5h1.500v9H5zM13 5v9L8 9.500z" fill="#000" />
      </svg>
    </aside>
  );
}

function Play(): React.ReactElement {
  return (
    <svg viewBox="0 0 5 10" className="h-[10px] w-[5px] shrink-0" aria-hidden>
      <path d="M0 0l5 5-5 5z" fill="#000" />
    </svg>
  );
}

function StatusBar(): React.ReactElement {
  return (
    <footer className="flex h-[45px] shrink-0 border-t border-white text-[13px] whitespace-nowrap">
      <div className="min-w-0 flex-1 pl-1">
        <div className="flex h-[22px] items-center">
          <span className="mr-[9px] w-[106px]">( 2 783,762; 1 6...</span>
          <Play />
          <span className="ml-[309px]">Выделено объектов: 5 вкл. Слой 1</span>
        </div>
        <div className="flex h-5 items-center gap-[6px]">
          <span>Цветовые профили документа: RGB: sRGB IEC61966-2.1; CMYK: ISO Coated v2 (ECI); Оттенки серого: Dot Gain 15%</span>
          <Play />
        </div>
      </div>
      <div className="w-[75px] shrink-0 pt-[2px]">
        <Icon name="monitor" />
      </div>
      <div className="flex w-[218px] shrink-0 flex-col">
        <div className="flex h-[22px] items-center">
          <span className="mr-1 h-3 w-px bg-[#c9c6be]" />
          <Icon name="fill" className="mr-1 size-4" />
          <svg viewBox="0 0 18 18" className="size-[18px]" aria-hidden>
            <path d="M.5.5h17v17H.5zM1 1l16 16M17 1L1 17" fill="#fff" stroke="#333" />
          </svg>
          <span className="ml-[2px]">Нет</span>
        </div>
        <div className="flex h-5 items-center pl-[5px]">
          <Icon name="nib" className="mr-1 size-4" />
          <span className="size-[18px] border border-[#777] bg-[#151616]" />
          <span className="ml-[2px]">C:0 M:0 Y:0 K:100</span>
        </div>
      </div>
      <div className="relative mt-[6px] mr-[6px] h-5 w-5 shrink-0">
        <Icon name="user" />
        <svg viewBox="0 0 5 5" className="absolute right-0 bottom-0 size-[5px]" aria-hidden>
          <path d="M5 0v5H0z" fill="#000" />
        </svg>
      </div>
    </footer>
  );
}

const tasks = [
  { icon: "folder", title: "C:\\Program Files..." },
  { icon: "folder", title: "C:\\1" },
  { icon: "folder", title: "C:\\aiscript\\Docu..." },
  { icon: "folder", title: "D:\\Documents a..." },
  { icon: "chrome", title: "[X5] - Выравнив..." },
];

function Taskbar(): React.ReactElement {
  return (
    <div className="flex h-7 shrink-0 items-center border-y border-[#42587f] bg-linear-to-b from-[#93a4c7] to-[#5a75a3] text-[14px] text-white [text-shadow:1px_1px_1px_#3c4f74]">
      <button type="button" aria-label="Пуск" className="ml-[25px] w-[45px] shrink-0">
        <Icon name="windows" />
      </button>
      {tasks.map(({ icon, title }) => (
        <button key={title} type="button" className="flex w-40 min-w-0 items-center gap-1 pl-2 whitespace-nowrap">
          <Icon name={icon} className="size-[19px]" />
          {title}
        </button>
      ))}
      <button
        type="button"
        className="flex h-[23px] w-[155px] shrink-0 items-center gap-1 rounded-[5px] border border-[#3e5378] bg-[#5d7199]/60 pl-2 whitespace-nowrap"
      >
        <Icon name="logo" className="size-[19px]" />
        CorelDRAW X6 -...
      </button>
      <div className="flex-1" />
      <span className="flex h-5 w-[18px] items-center justify-center bg-[#4d648f] text-[13px]">EN</span>
      <div className="mr-[3px] ml-[6px] flex h-[23px] w-[195px] shrink-0 items-center gap-1 rounded-[5px] border border-[#3e5378] bg-[#6179a5]/60 pl-2">
        {["pdf", "icq", "sound", "flash", "nvidia", "camera"].map((name) => (
          <Icon key={name} name={name} />
        ))}
        <time className="ml-auto pr-[10px]">11:53</time>
      </div>
    </div>
  );
}

export default function App(): React.ReactElement {
  return (
    <div className="flex min-h-screen flex-col overflow-hidden bg-[#edeae3] font-['DejaVu_Sans_Condensed','DejaVu_Sans',sans-serif] text-black">
      <TitleBar />
      <MenuBar />
      <StandardBar />
      <PropertyBar />
      <div className="flex flex-1 border-b border-[#c9c6be]">
        <Toolbox />
        <Workspace />
        <Docker />
        <ColorPalette />
      </div>
      <StatusBar />
      <Taskbar />
    </div>
  );
}
